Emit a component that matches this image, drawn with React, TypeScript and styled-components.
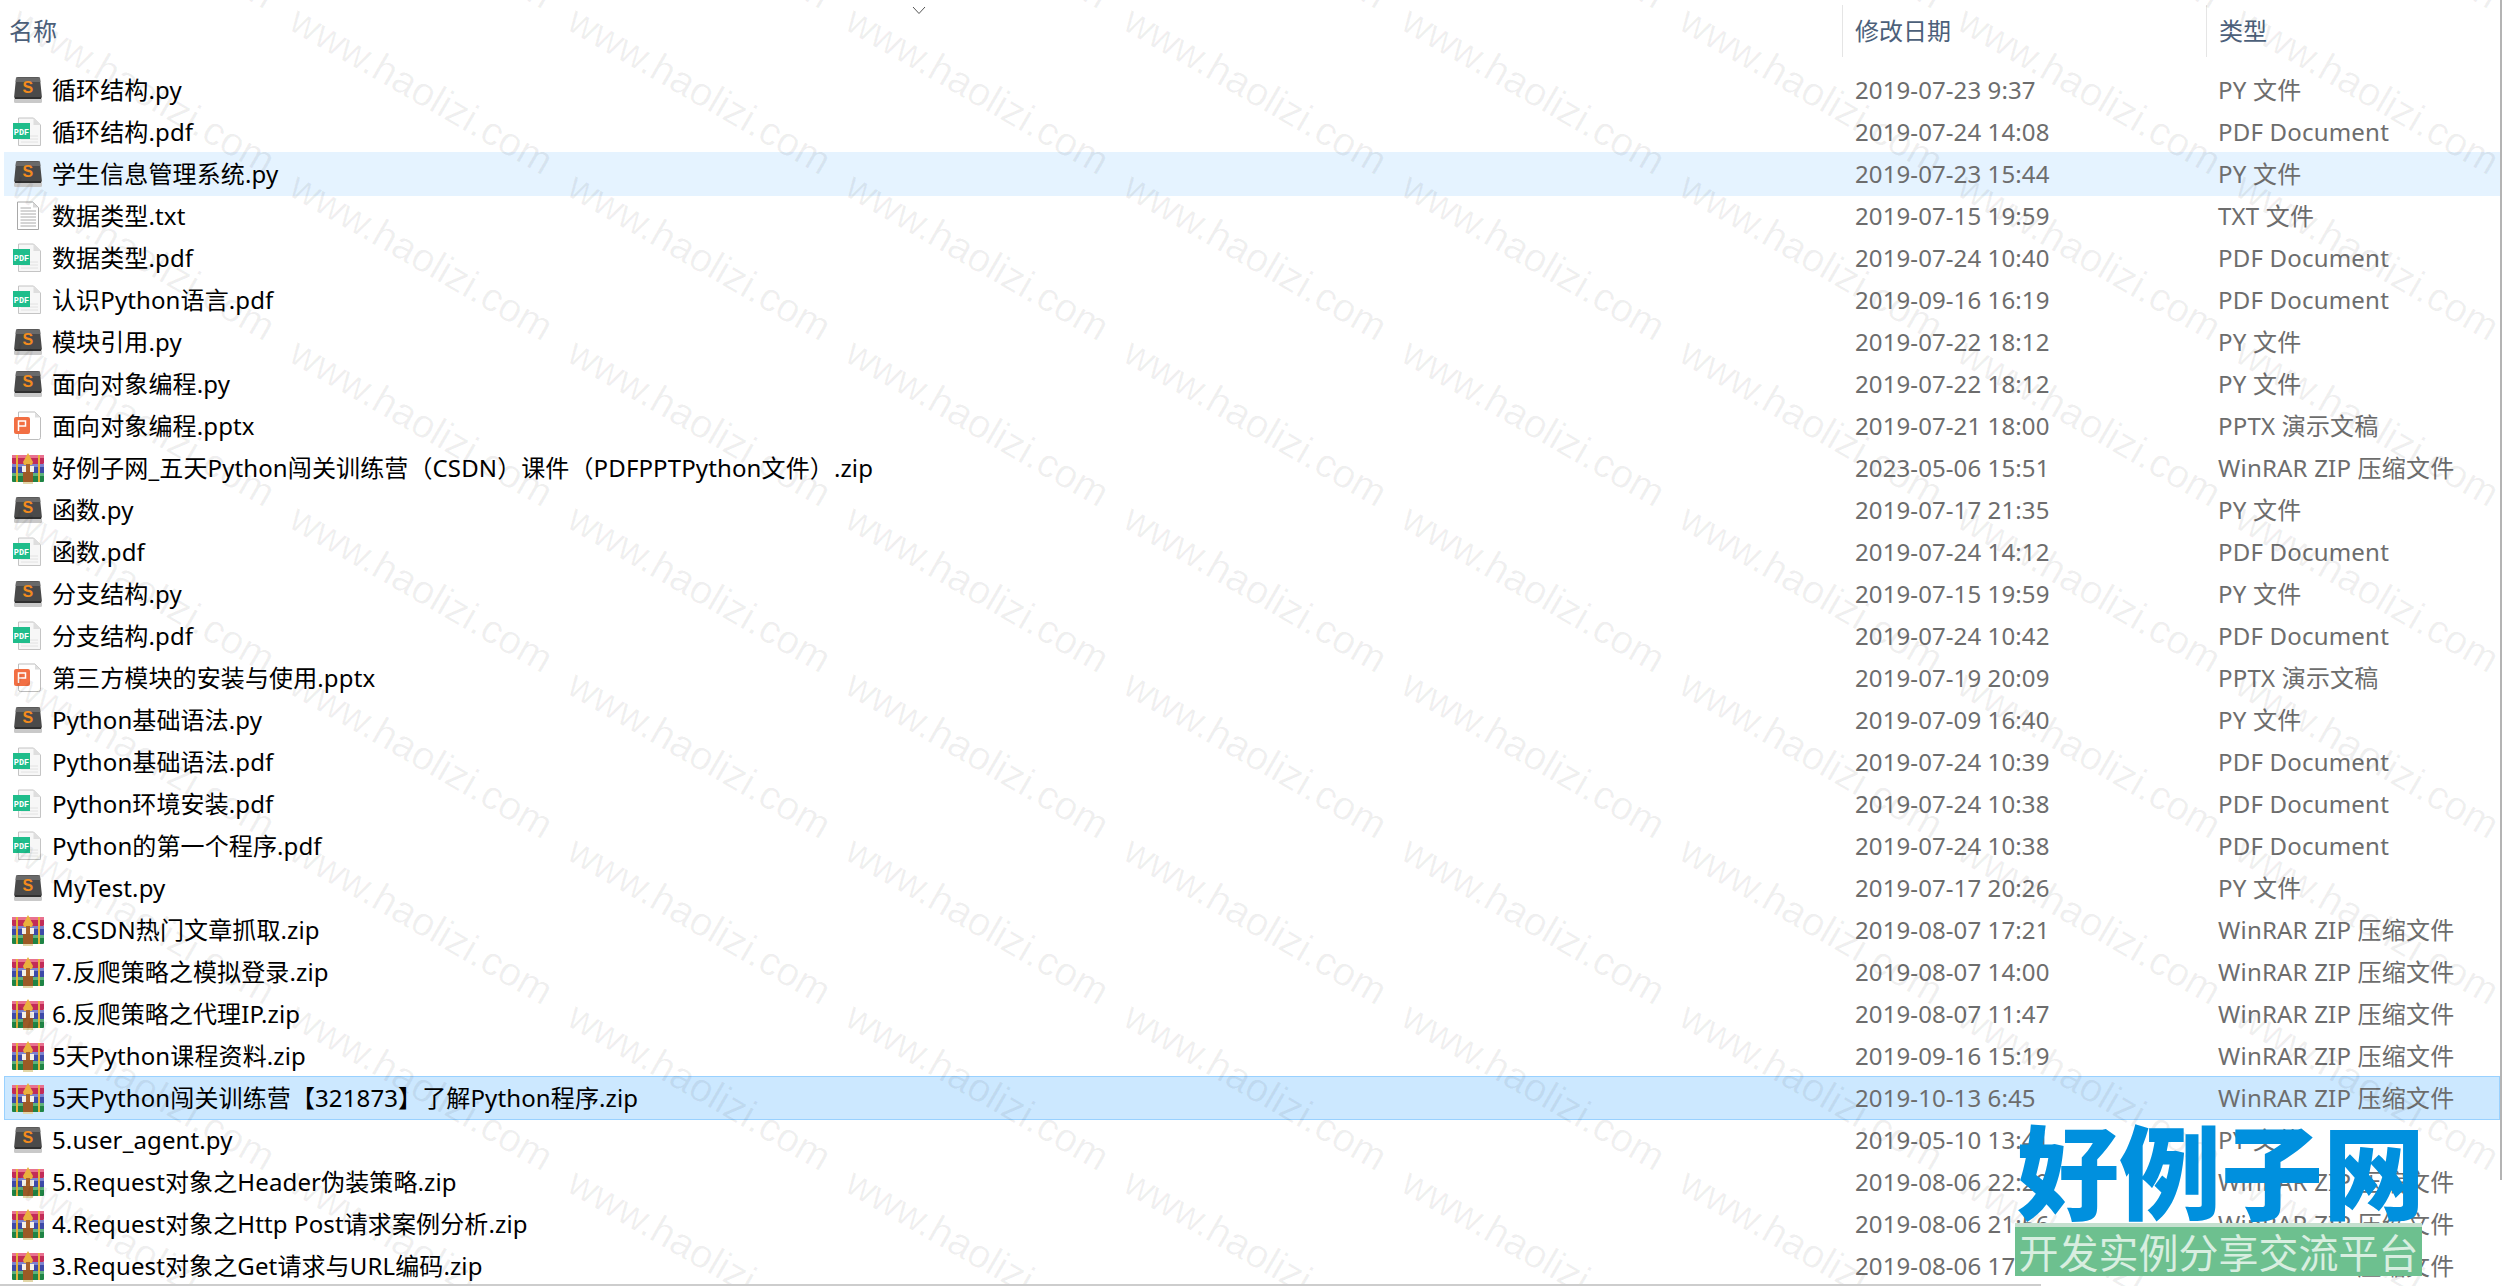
import React from 'react'
import styled, { createGlobalStyle } from 'styled-components'

type FileKind = 'py' | 'pdf' | 'txt' | 'pptx' | 'zip'

type FileRow = {
  name: string
  date: string
  kind: FileKind
  state?: 'hover' | 'selected'
}

const typeLabels: Record<FileKind, string> = {
  py: 'PY 文件',
  pdf: 'PDF Document',
  txt: 'TXT 文件',
  pptx: 'PPTX 演示文稿',
  zip: 'WinRAR ZIP 压缩文件',
}

const files: FileRow[] = [
  { name: '循环结构.py', date: '2019-07-23 9:37', kind: 'py' },
  { name: '循环结构.pdf', date: '2019-07-24 14:08', kind: 'pdf' },
  { name: '学生信息管理系统.py', date: '2019-07-23 15:44', kind: 'py', state: 'hover' },
  { name: '数据类型.txt', date: '2019-07-15 19:59', kind: 'txt' },
  { name: '数据类型.pdf', date: '2019-07-24 10:40', kind: 'pdf' },
  { name: '认识Python语言.pdf', date: '2019-09-16 16:19', kind: 'pdf' },
  { name: '模块引用.py', date: '2019-07-22 18:12', kind: 'py' },
  { name: '面向对象编程.py', date: '2019-07-22 18:12', kind: 'py' },
  { name: '面向对象编程.pptx', date: '2019-07-21 18:00', kind: 'pptx' },
  { name: '好例子网_五天Python闯关训练营（CSDN）课件（PDFPPTPython文件）.zip', date: '2023-05-06 15:51', kind: 'zip' },
  { name: '函数.py', date: '2019-07-17 21:35', kind: 'py' },
  { name: '函数.pdf', date: '2019-07-24 14:12', kind: 'pdf' },
  { name: '分支结构.py', date: '2019-07-15 19:59', kind: 'py' },
  { name: '分支结构.pdf', date: '2019-07-24 10:42', kind: 'pdf' },
  { name: '第三方模块的安装与使用.pptx', date: '2019-07-19 20:09', kind: 'pptx' },
  { name: 'Python基础语法.py', date: '2019-07-09 16:40', kind: 'py' },
  { name: 'Python基础语法.pdf', date: '2019-07-24 10:39', kind: 'pdf' },
  { name: 'Python环境安装.pdf', date: '2019-07-24 10:38', kind: 'pdf' },
  { name: 'Python的第一个程序.pdf', date: '2019-07-24 10:38', kind: 'pdf' },
  { name: 'MyTest.py', date: '2019-07-17 20:26', kind: 'py' },
  { name: '8.CSDN热门文章抓取.zip', date: '2019-08-07 17:21', kind: 'zip' },
  { name: '7.反爬策略之模拟登录.zip', date: '2019-08-07 14:00', kind: 'zip' },
  { name: '6.反爬策略之代理IP.zip', date: '2019-08-07 11:47', kind: 'zip' },
  { name: '5天Python课程资料.zip', date: '2019-09-16 15:19', kind: 'zip' },
  { name: '5天Python闯关训练营【321873】了解Python程序.zip', date: '2019-10-13 6:45', kind: 'zip', state: 'selected' },
  { name: '5.user_agent.py', date: '2019-05-10 13:41', kind: 'py' },
  { name: '5.Request对象之Header伪装策略.zip', date: '2019-08-06 22:29', kind: 'zip' },
  { name: '4.Request对象之Http Post请求案例分析.zip', date: '2019-08-06 21:56', kind: 'zip' },
  { name: '3.Request对象之Get请求与URL编码.zip', date: '2019-08-06 17:40', kind: 'zip' },
]

const SublimeIcon = () => (
  <svg width="30" height="28" viewBox="0 0 30 28">
    <path d="M3 2.5Q3 1 5 1H25Q27 1 27 2.5L29 22H1Z" fill="#4a4a4a" />
    <path d="M3 1.5H27L27.4 6H2.6Z" fill="#6a6a6a" />
    <rect x="1" y="21" width="28" height="6" rx="1.5" fill="#c9c9c9" />
    <rect x="2" y="21" width="26" height="2" fill="#303030" />
    <text x="15" y="17" textAnchor="middle" fontFamily="'Liberation Sans', sans-serif" fontWeight="700" fontSize="16" fill="#f28b1e">S</text>
  </svg>
)

const PdfIcon = () => (
  <svg width="30" height="30" viewBox="0 0 30 30">
    <path d="M5.5 1H20.500L27.500 8V28.500H5.500Z" fill="#f7f7f7" stroke="#c4c4c4" strokeWidth="1" />
    <path d="M20.500 1V8H27.500Z" fill="#dedede" />
    <path d="M8 19H25M8 22H25M8 25H25" stroke="#e2e2e2" strokeWidth="1" />
    <rect x="0" y="6" width="17" height="16" fill="#1fbd8b" />
    <text x="8.500" y="17.500" textAnchor="middle" fontFamily="'Liberation Mono', monospace" fontWeight="700" fontSize="8.500" fill="#fff">PDF</text>
  </svg>
)

const TxtIcon = () => (
  <svg width="30" height="30" viewBox="0 0 30 30">
    <path d="M4.500 1H20L25.500 6.500V28.500H4.500Z" fill="#fff" stroke="#a8a8a8" strokeWidth="1" />
    <path d="M20 1V6.500H25.500Z" fill="#d8d8d8" />
    <path d="M7.500 7H18M7.500 10H23M7.500 13H23M7.500 16H23M7.500 19H23M7.500 22H23M7.500 25H23" stroke="#aaa" strokeWidth="1" />
  </svg>
)

const PptxIcon = () => (
  <svg width="30" height="30" viewBox="0 0 30 30">
    <path d="M5.500 1H22L27.500 6.500V26.500Q27.500 28.500 25.500 28.500H7.500Q5.500 28.500 5.500 26.500Z" fill="#fff" stroke="#bdbdbd" strokeWidth="1" />
    <path d="M22 1V6.500H27.500Z" fill="#dedede" />
    <rect x="1" y="6" width="16" height="17" rx="2" fill="#f26f43" />
    <path d="M5.500 20V10H12.500V15H5.500" fill="none" stroke="#fff" strokeWidth="1.500" />
  </svg>
)

const RarIcon = () => (
  <svg width="32" height="31" viewBox="0 0 32 31">
    <rect x="0" y="2" width="32" height="9" rx="1" fill="#c22c58" />
    <rect x="0" y="2" width="32" height="3" fill="#e9718f" />
    <rect x="0" y="11" width="32" height="9" fill="#3d4aa8" />
    <rect x="0" y="11" width="32" height="3" fill="#7c84cf" />
    <rect x="0" y="20" width="32" height="9" rx="1" fill="#1f8445" />
    <rect x="0" y="20" width="32" height="3" fill="#5fb27c" />
    <rect x="4" y="2" width="2" height="27" fill="#e5b23a" />
    <rect x="26" y="2" width="2" height="27" fill="#e5b23a" />
    <path d="M11 9L16 0L21 9L20 12H12Z" fill="#eab13d" />
    <rect x="10" y="13" width="12" height="6" fill="#f3efe6" />
    <rect x="11" y="19" width="10" height="11" fill="#9c5a26" />
    <rect x="14" y="11" width="4" height="8" fill="#a8612a" />
    <rect x="11" y="29" width="10" height="2" fill="#e3d7a8" />
  </svg>
)

const icons: Record<FileKind, React.ReactNode> = {
  py: <SublimeIcon />,
  pdf: <PdfIcon />,
  txt: <TxtIcon />,
  pptx: <PptxIcon />,
  zip: <RarIcon />,
}

const watermarkTiles = Array.from({ length: 11 * 10 }, (_, i) => i)

export default function App() {
  return (
    <>
      <GlobalStyle />
      <Page>
        <Header>
          <HeaderCell>名称</HeaderCell>
          <HeaderCell $divided>修改日期</HeaderCell>
          <HeaderCell $divided>类型</HeaderCell>
          <SortArrow width="14" height="9" viewBox="0 0 14 9">
            <path d="M1 1L7 7.500L13 1" fill="none" stroke="#555" strokeWidth="1" />
          </SortArrow>
        </Header>
        <List>
          {files.map((file) => (
            <Row key={file.name} $state={file.state}>
              <NameCell>
                <IconSlot>{icons[file.kind]}</IconSlot>
                {file.name}
              </NameCell>
              <DateCell>{file.date}</DateCell>
              <TypeCell>{typeLabels[file.kind]}</TypeCell>
            </Row>
          ))}
        </List>
        <Watermark>
          {watermarkTiles.map((i) => (
            <WatermarkTile key={i}>
              <WatermarkText>www.haolizi.com</WatermarkText>
            </WatermarkTile>
          ))}
        </Watermark>
        <Logo>
          <LogoTitle>好例子网</LogoTitle>
          <LogoBanner>开发实例分享交流平台</LogoBanner>
        </Logo>
        <ScrollTrackBottom />
        <ScrollTrackRight />
      </Page>
    </>
  )
}

const GlobalStyle = createGlobalStyle`
  html, body {
    margin: 0;
    padding: 0;
    background: #fff;
  }
`

const Page = styled.div`
  position: relative;
  width: 2502px;
  height: 1286px;
  overflow: hidden;
  background: #fff;
  font-family: "Noto Sans", "Noto Sans CJK SC", sans-serif;
  font-size: 24px;
`

const Header = styled.div`
  position: relative;
  display: grid;
  grid-template-columns: 1842px 364px 1fr;
  height: 52px;
  padding-top: 5px;
  margin-bottom: 11px;
  color: #4c607a;
  font-size: 24px;
`

const HeaderCell = styled.div<{ $divided?: boolean }>`
  display: flex;
  align-items: center;
  padding-left: ${(p) => (p.$divided ? '12px' : '9px')};
  border-left: ${(p) => (p.$divided ? '1px solid #e5e5e5' : 'none')};
  line-height: 1;
`

const SortArrow = styled.svg`
  position: absolute;
  left: 912px;
  top: 6px;
`

const List = styled.div`
  display: flex;
  flex-direction: column;
`

const Row = styled.div<{ $state?: 'hover' | 'selected' }>`
  display: grid;
  grid-template-columns: 1838px 364px 1fr;
  align-items: center;
  box-sizing: border-box;
  height: 44px;
  margin: 0 2px -2px 4px;
  background: ${(p) =>
    p.$state === 'selected' ? '#cce8ff' : p.$state === 'hover' ? '#e5f3ff' : 'transparent'};
  border: 1px solid ${(p) => (p.$state === 'selected' ? '#99d1ff' : 'transparent')};
`

const NameCell = styled.div`
  display: flex;
  align-items: center;
  padding-left: 7px;
  color: #000;
  white-space: nowrap;
  line-height: 1;
  letter-spacing: 0.12px;
`

const IconSlot = styled.span`
  display: flex;
  align-items: center;
  justify-content: center;
  flex: none;
  width: 32px;
  margin-right: 8px;
`

const DateCell = styled.div`
  padding-left: 12px;
  color: #6d6d6d;
  white-space: nowrap;
  line-height: 1;
  letter-spacing: 0.1px;
`

const TypeCell = styled(DateCell)`
  padding-left: 11px;
  letter-spacing: 0.2px;
`

const Watermark = styled.div`
  position: absolute;
  left: -273.5px;
  top: -159px;
  display: grid;
  grid-template-columns: repeat(11, 278px);
  grid-auto-rows: 166px;
  pointer-events: none;
`

const WatermarkTile = styled.div`
  display: flex;
  align-items: center;
  justify-content: center;
`

const WatermarkText = styled.span`
  flex: none;
  transform: rotate(30deg);
  font-family: "Liberation Sans", sans-serif;
  font-size: 40px;
  line-height: 1;
  color: rgba(0, 0, 0, 0.06);
  white-space: nowrap;
`

const Logo = styled.div`
  position: absolute;
  left: 2015px;
  top: 1110px;
  display: flex;
  flex-direction: column;
  align-items: stretch;
  width: 407px;
`

const LogoTitle = styled.div`
  height: 113px;
  padding-left: 2px;
  font-family: "Noto Sans CJK SC", sans-serif;
  font-weight: 900;
  font-size: 102px;
  line-height: 115px;
  color: #0090de;
  white-space: nowrap;
`

const LogoBanner = styled.div`
  box-sizing: border-box;
  height: 53px;
  border-top: 4px solid #c5e0cf;
  background: #6dc08f;
  color: #d8eee0;
  font-family: "Noto Sans CJK SC", sans-serif;
  font-size: 40px;
  line-height: 48px;
  text-align: center;
  white-space: nowrap;
`

const ScrollTrackBottom = styled.div`
  position: absolute;
  left: 0;
  bottom: 0;
  width: 2041px;
  height: 2px;
  background: #cdcdcd;
`

const ScrollTrackRight = styled.div`
  position: absolute;
  right: 0;
  top: 0;
  width: 2px;
  height: 1180px;
  background: #b4b4b4;
`
